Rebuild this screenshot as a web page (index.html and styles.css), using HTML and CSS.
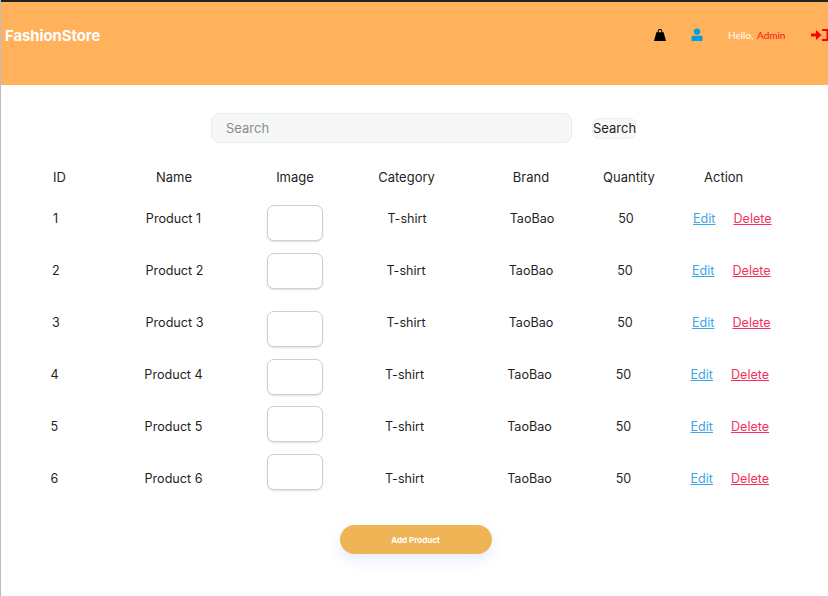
FILE: index.html
```html
<!DOCTYPE html>
<html lang="en">
<head>
    <meta charset="UTF-8">
    <meta name="viewport" content="width=device-width, initial-scale=1.0">
    <title>FashionStore</title>
    <link rel="stylesheet" href="styles.css">
</head>
<body>

<div class="page">
    <header class="topbar">
        <div class="brand">FashionStore</div>
        <nav class="topnav">
            <svg class="icon-bag" viewBox="0 0 14 14" width="14" height="14">
                <path d="M4.6 5 C4.6 1.6 5.6 1 7 1 C8.4 1 9.4 1.6 9.4 5 L8.5 5 C8.5 2.6 8 2 7 2 C6 2 5.5 2.6 5.5 5 Z" fill="#000"/>
                <path d="M3.4 4.2 H10.6 L13 13 H1 Z" fill="#000"/>
            </svg>
            <svg class="icon-user" viewBox="0 0 12 14" width="12" height="14">
                <circle cx="6" cy="3.6" r="3.2" fill="#039be5"/>
                <path d="M1.5 7.8 H10.5 Q11.5 7.8 11.5 9 V13 H.5 V9 Q.5 7.8 1.5 7.8 Z" fill="#039be5"/>
            </svg>
            <div class="greeting">Hello, <span class="admin">Admin</span></div>
            <svg class="icon-logout" viewBox="0 0 18 12" width="18" height="12">
                <path d="M0 4.5 H5 V1 L10.5 6 L5 11 V7.5 H0 Z" fill="#f00"/>
                <path d="M11 1 H16.5 V11 H11" fill="none" stroke="#f00" stroke-width="2"/>
            </svg>
        </nav>
    </header>

    <form class="search">
        <input class="search-input" type="text" placeholder="Search">
        <button class="search-button" type="button">Search</button>
    </form>

    <div class="table">
        <div class="row head">
            <div class="col-id">ID</div>
            <div class="col-mid">Name</div>
            <div class="col-image">Image</div>
            <div class="col-mid">Category</div>
            <div class="col-mid">Brand</div>
            <div class="col-mid">Quantity</div>
            <div class="col-action">Action</div>
        </div>
        <div class="row item-1">
            <div class="col-id">1</div>
            <div class="col-mid">Product 1</div>
            <div class="col-image"><div class="thumb"></div></div>
            <div class="col-mid">T-shirt</div>
            <div class="col-mid">TaoBao</div>
            <div class="col-mid">50</div>
            <div class="col-action"><a class="edit" href="#">Edit</a><a class="delete" href="#">Delete</a></div>
        </div>
        <div class="row item-2">
            <div class="col-id">2</div>
            <div class="col-mid">Product 2</div>
            <div class="col-image"><div class="thumb"></div></div>
            <div class="col-mid">T-shirt</div>
            <div class="col-mid">TaoBao</div>
            <div class="col-mid">50</div>
            <div class="col-action"><a class="edit" href="#">Edit</a><a class="delete" href="#">Delete</a></div>
        </div>
        <div class="row item-3">
            <div class="col-id">3</div>
            <div class="col-mid">Product 3</div>
            <div class="col-image"><div class="thumb"></div></div>
            <div class="col-mid">T-shirt</div>
            <div class="col-mid">TaoBao</div>
            <div class="col-mid">50</div>
            <div class="col-action"><a class="edit" href="#">Edit</a><a class="delete" href="#">Delete</a></div>
        </div>
        <div class="row item-4">
            <div class="col-id">4</div>
            <div class="col-mid">Product 4</div>
            <div class="col-image"><div class="thumb"></div></div>
            <div class="col-mid">T-shirt</div>
            <div class="col-mid">TaoBao</div>
            <div class="col-mid">50</div>
            <div class="col-action"><a class="edit" href="#">Edit</a><a class="delete" href="#">Delete</a></div>
        </div>
        <div class="row item-5">
            <div class="col-id">5</div>
            <div class="col-mid">Product 5</div>
            <div class="col-image"><div class="thumb"></div></div>
            <div class="col-mid">T-shirt</div>
            <div class="col-mid">TaoBao</div>
            <div class="col-mid">50</div>
            <div class="col-action"><a class="edit" href="#">Edit</a><a class="delete" href="#">Delete</a></div>
        </div>
        <div class="row item-6">
            <div class="col-id">6</div>
            <div class="col-mid">Product 6</div>
            <div class="col-image"><div class="thumb"></div></div>
            <div class="col-mid">T-shirt</div>
            <div class="col-mid">TaoBao</div>
            <div class="col-mid">50</div>
            <div class="col-action"><a class="edit" href="#">Edit</a><a class="delete" href="#">Delete</a></div>
        </div>
    </div>

    <div class="actions">
        <button class="add-button" type="button">Add Product</button>
    </div>
</div>

</body>
</html>
```

FILE: styles.css
```css
html, body {
    margin: 0;
    padding: 0;
    background: #fff;
}
body {
    font-family: "Inter", "Open Sans", sans-serif;
    font-size: 12.6px;
    color: #1f1f1f;
}
.page {
    width: 828px;
    height: 596px;
    overflow: hidden;
    box-sizing: border-box;
    border-left: 1px solid #bdbdbd;
}

/* top bar */
.topbar {
    height: 85px;
    box-sizing: border-box;
    border-top: 2px solid #222;
    background: #ffb25b;
    display: flex;
    align-items: center;
    justify-content: space-between;
    padding-left: 4px;
    padding-bottom: 17px;
}
.brand {
    font-size: 14.8px;
    font-weight: 700;
    color: #fff;
    margin-top: 2px;
}
.topnav {
    display: flex;
    align-items: center;
    margin-right: -1px;
}
.icon-bag {
    margin-right: 24px;
}
.icon-user {
    margin-right: 25px;
}
.greeting {
    font-family: "Lato", sans-serif;
    font-size: 10px;
    color: #fff;
    width: 83px;
}
.admin {
    color: #f11;
    margin-left: 1px;
}

/* search */
.search {
    display: flex;
    align-items: center;
    margin: 28px 0 0 210px;
}
.search-input {
    width: 361px;
    height: 30px;
    box-sizing: border-box;
    padding: 0 14px;
    background: #f6f8f7;
    border: 1px solid #e9ecea;
    border-radius: 8px;
    font: inherit;
    font-size: 13px;
    outline: none;
}
.search-input::placeholder {
    color: #8c8c8c;
}
.search-button {
    margin-left: 20px;
    height: 21px;
    width: 44px;
    padding: 0;
    background: #f6f8f7;
    border: 1px solid #eef0ef;
    border-radius: 6px;
    font: inherit;
    font-size: 13px;
    color: #1f1f1f;
}

/* table */
.table {
    margin-top: 21px;
}
.row {
    --shift: 0px;
    --name: 0px;
    --drop: 0px;
    height: 52px;
    display: grid;
    grid-template-columns:
        calc(80px + 2 * var(--shift) + var(--name))
        calc(186px - 2 * var(--shift) - var(--name))
        56px
        calc(168px + 2 * var(--shift))
        calc(82px - 2 * var(--shift))
        calc(106px + 2 * var(--shift))
        1fr;
    align-items: center;
}
.row.head {
    height: 26px;
    margin-bottom: 2px;
    font-size: 13px;
    grid-template-columns: 80px 186px 56px 167px 82px 114px 1fr;
}
.item-1 { --drop: 5px; --name: -1px; }
.item-2 { --drop: 1px; --shift: -1px; --name: 3px; }
.item-3 { --drop: 7px; --shift: -1px; --name: 3px; }
.item-4 { --drop: 3px; --shift: -2.5px; --name: 4px; }
.item-5 { --drop: -2px; --shift: -2.5px; --name: 4px; }
.item-6 { --drop: -6px; --shift: -2.5px; --name: 4px; }

.col-id {
    padding-left: calc(52px + var(--shift));
}
.col-mid, .col-image {
    text-align: center;
}
.col-action {
    padding-left: calc(14px - var(--shift));
    white-space: nowrap;
}
.head .col-action {
    padding-left: 18px;
}
.thumb {
    width: 56px;
    height: 36px;
    box-sizing: border-box;
    margin-top: calc(2 * var(--drop));
    background: #fff;
    border: 1px solid #cfcfcf;
    border-radius: 7px;
    box-shadow: 0 1px 2px rgba(0, 0, 0, .12);
}
.edit {
    color: #3fa4e8;
}
.delete {
    color: #f5325f;
    margin-left: 18px;
}

/* add product */
.actions {
    display: flex;
    justify-content: center;
    margin-top: 21px;
    padding-left: 2px;
}
.add-button {
    width: 152px;
    height: 29px;
    padding: 0;
    background: #eeb455;
    border: 0;
    border-radius: 15px;
    box-shadow: 0 6px 14px rgba(90, 120, 240, .14);
    font: inherit;
    font-size: 8px;
    font-weight: 700;
    color: #fff;
}
```
